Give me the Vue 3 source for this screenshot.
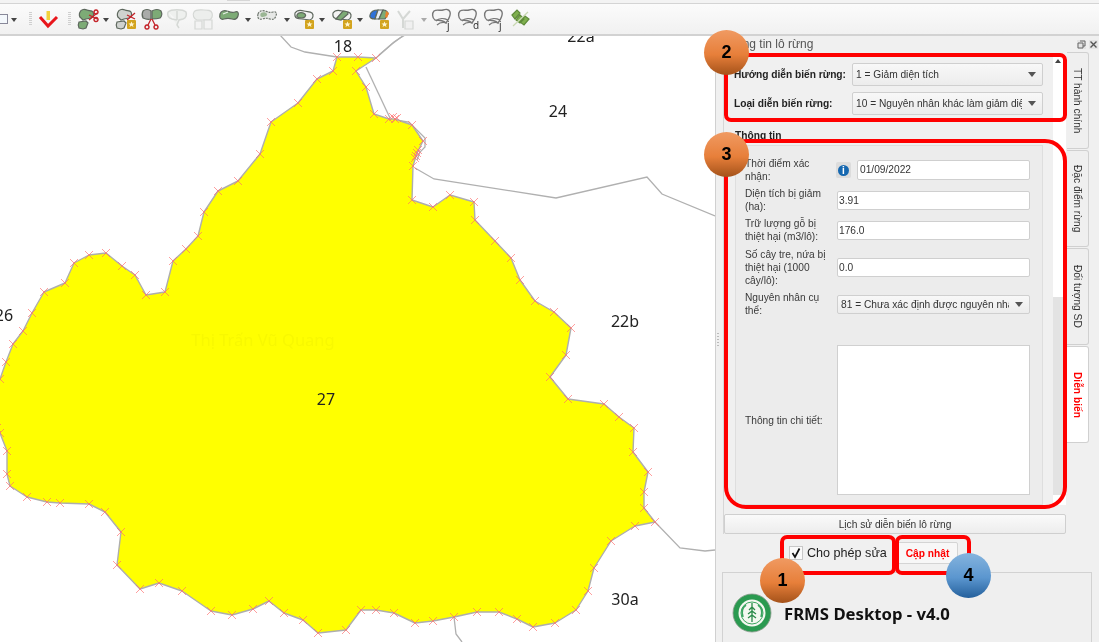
<script setup>
const GREEN = '#7dab76'
const EDGE = '#5d675d'
const PALE = '#d5d8d5'
const RED = '#c4242a'

const BOUNDARY = [
  [337,57],[358,57],[376,58],[356,71],[366,87],[374,114],[389,119],[395,119],[412,125],[423,141],
  [417,153],[413,166],[412,200],[433,207],[450,195],[474,202],[475,220],[495,241],[511,258],[520,280],
  [535,301],[554,312],[571,328],[566,355],[550,377],[568,399],[604,404],[619,417],[634,428],[633,452],
  [648,472],[644,492],[644,508],[655,522],[635,526],[611,541],[594,568],[588,591],[576,610],[555,623],
  [533,627],[517,619],[499,612],[477,612],[454,617],[433,621],[415,623],[394,613],[376,610],[361,610],
  [346,630],[318,633],[303,620],[284,613],[269,601],[253,609],[232,615],[211,611],[182,591],[159,583],
  [140,589],[117,565],[121,532],[105,512],[89,504],[60,503],[47,502],[27,497],[10,486],[7,474],
  [7,451],[0,433],[-3,428],[-8,400],[0,379],[6,362],[13,344],[23,331],[32,313],[44,292],
  [65,283],[74,263],[89,255],[106,253],[122,266],[135,275],[146,295],[165,292],[173,261],[186,249],
  [198,236],[204,212],[218,191],[238,181],[260,154],[271,122],[298,103],[317,79],[333,71],
]
const polygon = BOUNDARY.map(p => p.join(',')).join(' ')

// a few vertices bunched up on the north east corner
const CLUSTER = [[393,117],[397,118],[418,150],[416,156],[415,158]]
const markers = [...BOUNDARY, ...CLUSTER]

const NEIGHBOURS = [
  '280,35 291,47 305,52 337,57',
  '376,58 392,44 400,38 410,32',
  '379,55 394,42 403,36',
  '366,67 390,118',
  '395,120 409,122 425,138 425,147 420,152 417,160',
  '415,168 434,179 556,198 647,177 662,194 715,216',
  '655,522 680,548 705,551 715,550',
  '454,617 456,634 462,642',
]

const LABELS = [
  { text: '18', x: 343, y: 52 },
  { text: '22a', x: 581, y: 42 },
  { text: '24', x: 558, y: 117 },
  { text: '26', x: 4, y: 321 },
  { text: '27', x: 326, y: 405 },
  { text: '22b', x: 625, y: 327 },
  { text: '30a', x: 625, y: 605 },
]

const SCISSORS = [
  { d: 'M13 9l8 4M13 14l8-7', fill: 'none', stroke: RED, width: 1.3 },
  { d: 'M20 11.5a2 2 0 1 0 .01 0M20 4a2 2 0 1 0 .01 0', fill: 'none', stroke: RED, width: 1.5 },
]
const TWO_PIECES = (fill, edge) => [
  { d: 'M4 6c1-3 5-3 7-2s5 0 6 2 1 5-2 6l-5 1-3 1-2-2C3 11 3 8 4 6z', fill, stroke: edge },
  { d: 'M3 16l7-1 2 2-2 5-3 1-4-1c-1-2-1-4 0-6z', fill, stroke: edge },
]
const WIDE = (fill, edge) => [
  { d: 'M3 8c1-3 4-4 7-3s5 2 8 1 4 1 3 4-3 4-6 3-5-1-8 0-5-1-4-5z', fill, stroke: edge },
]
const OUTLINE = { d: 'M3 7c2-3 6-3 9-2s6 0 8 2 1 6-2 7l-8-1c-3 0-8 0-7-6z', fill: 'none', stroke: EDGE }
const FAINT_MAP = [
  { d: 'M3 6c2-3 6-2 10-2s7 0 8 3 0 6-3 7H6C3 13 1 9 3 6z', fill: '#eceeec', stroke: PALE },
  { d: 'M4 15h7v8H4zM13 14h8v9h-8z', fill: '#f3f3f3', stroke: PALE },
]
const CURVE = [
  { d: 'M4 5c3-2 6 0 9-1s6-1 7 2-1 6-2 8l-2 3c-3-3-8-3-11-3C2 12 2 7 4 5z', fill: '#f6f6f6', stroke: '#787878', width: 1.4 },
  { d: 'M6 15c3-3 8-3 12-1M7 19c3-3 7-3 10-2', fill: 'none', stroke: '#787878' },
]

const TOOLS = [
  { type: 'page', w: 8 },
  { type: 'arrow', w: 12 },
  { type: 'space', w: 8 },
  { type: 'grip', w: 4 },
  { type: 'space', w: 4 },
  { type: 'icon', w: 24, paths: [
    { d: 'M10.5 5h3.5v9h-3.5z', fill: '#f2d23c', stroke: 'none' },
    { d: 'M4 11l8 9 9-9', fill: 'none', stroke: '#e8151b', width: 3 },
  ] },
  { type: 'space', w: 7 },
  { type: 'grip', w: 4 },
  { type: 'space', w: 4 },
  { type: 'icon', w: 26, paths: [...TWO_PIECES(GREEN, EDGE), ...SCISSORS] },
  { type: 'arrow', w: 10 },
  { type: 'icon', w: 30, badge: true, paths: [...TWO_PIECES('#cfd2cf', EDGE), ...SCISSORS.slice(0, 1)] },
  { type: 'icon', w: 22, paths: [
    { d: 'M3 5c2-2 6-2 8 0v8c-3 1-6 0-8-1-1-2-1-5 0-7z', fill: '#a9aba9', stroke: EDGE },
    { d: 'M12 5c3-2 7-2 9 0 1 2 1 5-1 7-3 1-5 1-8 1z', fill: GREEN, stroke: EDGE },
    { d: 'M11 13l-3 6M12 13l3 6', fill: 'none', stroke: RED, width: 1.3 },
    { d: 'M7 19a2 2 0 1 0 .01 0M16 19a2 2 0 1 0 .01 0', fill: 'none', stroke: RED, width: 1.5 },
  ] },
  { type: 'icon', w: 28, paths: [
    { d: 'M3 6c3-3 15-3 18 0 1 3 0 6-3 7l-4 1-2 5 2 3M12 5v9M3 6c-1 3 0 6 4 7l5 1', fill: '#eef0ee', stroke: PALE, width: 1.5 },
  ] },
  { type: 'icon', w: 24, paths: FAINT_MAP },
  { type: 'icon', w: 28, paths: [...WIDE(GREEN, EDGE), { d: 'M6 8l5-2', fill: 'none', stroke: '#e8f0e6' }] },
  { type: 'arrow', w: 10 },
  { type: 'icon', w: 28, paths: [
    { ...WIDE('#e6e8e6', '#6d756d')[0], dash: '2 1' },
    { d: 'M6 7c2-1 5-1 6 1s-3 3-5 3-2-3-1-4z', fill: '#9ab694', stroke: 'none' },
  ] },
  { type: 'arrow', w: 11 },
  { type: 'icon', w: 24, badge: true, paths: [
    { ...OUTLINE, fill: '#f4f4f4' },
    { d: 'M5 9c1-3 6-3 8-1s-1 4-3 4-6 0-5-3z', fill: GREEN, stroke: EDGE },
  ] },
  { type: 'arrow', w: 12 },
  { type: 'icon', w: 28, badge: true, paths: [
    { ...OUTLINE, fill: '#f4f4f4' },
    { d: 'M6 13l7-8c3 0 5 1 5 3l-7 6z', fill: GREEN, stroke: EDGE },
  ] },
  { type: 'arrow', w: 8 },
  { type: 'icon', w: 30, badge: true, paths: [
    { d: 'M3 9c1-4 5-5 8-5l-3 9c-3 0-6-1-5-4z', fill: '#2f72d8', stroke: EDGE },
    { d: 'M11 4h5l-4 9H8z', fill: '#e8eef4', stroke: EDGE },
    { d: 'M16 4c3 0 5 2 5 4l-3 5h-6z', fill: GREEN, stroke: EDGE },
    { d: 'M19 5l3 2-2 5-2-1z', fill: '#e8832e', stroke: 'none' },
  ] },
  { type: 'icon', w: 22, paths: [
    { d: 'M5 5l5 8 7-8M10 13v9', fill: 'none', stroke: PALE, width: 2 },
    { d: 'M12 15h8v8h-8z', fill: '#f0f0f0', stroke: PALE },
  ] },
  { type: 'arrow', w: 16, faint: true },
  { type: 'icon', w: 20, letter: 'j', paths: CURVE },
  { type: 'icon', w: 32, letter: 'd', paths: CURVE },
  { type: 'icon', w: 20, letter: 'j', paths: CURVE },
  { type: 'icon', w: 32, paths: [
    { d: 'M4 9l5-5 3 3-5 6zM12 16l5-6 4 3-5 6zM8 14l4-5 4 4-4 4z', fill: '#7fb04e', stroke: '#5f8a3a' },
    { d: 'M5 20l15-14', fill: 'none', stroke: '#c8d8b0' },
  ] },
]

const FIELDS = [
  { label: 'Diện tích bị giảm (ha):', value: '3.91' },
  { label: 'Trữ lượng gỗ bị thiệt hại (m3/lô):', value: '176.0' },
  { label: 'Số cây tre, nứa bị thiệt hại (1000 cây/lô):', value: '0.0', tall: true },
]

const TABS = [
  { name: 'TT hành chính' },
  { name: 'Đặc điểm rừng' },
  { name: 'Đối tượng SD' },
  { name: 'Diễn biến', active: true },
]

const MARKS = [
  { n: 2, cls: 'mark-a', tone: 'orange' },
  { n: 3, cls: 'mark-b', tone: 'orange' },
  { n: 1, cls: 'mark-c', tone: 'orange' },
  { n: 4, cls: 'mark-d', tone: 'blue' },
]
</script>

<template>
  <div class="screen">
    <div class="topstrip"><span class="strip-tab"></span></div>
    <div class="toolbar">
      <div
        v-for="(tool, i) in TOOLS"
        :key="i"
        class="tool"
        :style="{ width: tool.w + 'px' }"
      >
        <span v-if="tool.type === 'page'" class="page"></span>
        <span v-else-if="tool.type === 'arrow'" class="tool-arrow" :class="{ faint: tool.faint }"></span>
        <span v-else-if="tool.type === 'grip'" class="grip"></span>
        <svg v-else-if="tool.type === 'icon'" class="tool-icon" width="24" height="26" viewBox="0 0 24 26">
          <path
            v-for="(p, j) in tool.paths"
            :key="j"
            :d="p.d"
            :fill="p.fill"
            :stroke="p.stroke"
            :stroke-width="p.width || 1.2"
            :stroke-dasharray="p.dash"
          />
          <g v-if="tool.badge">
            <rect x="13" y="14" width="9" height="9" rx="1" fill="#d3a41e" />
            <path d="M17.5 15.5l.9 2h2.1l-1.7 1.4.7 2.2-2-1.3-2 1.3.7-2.2-1.7-1.4h2.1z" fill="#fff6d0" />
          </g>
          <text v-if="tool.letter" x="17" y="23" class="tool-letter">{{ tool.letter }}</text>
        </svg>
      </div>
    </div>

    <div class="workspace">
      <div class="map">
        <svg class="map-svg" width="715" height="606" viewBox="0 36 715 606">
          <polyline
            v-for="line in NEIGHBOURS"
            :key="line"
            :points="line"
            fill="none"
            stroke="#b0b0b0"
            stroke-width="1.3"
          />
          <polygon :points="polygon" fill="#ffff00" stroke="#aeaeae" stroke-width="1.4" stroke-linejoin="round" />
          <text x="263" y="346" class="place">Thị Trấn Vũ Quang</text>
          <path
            v-for="(m, i) in markers"
            :key="i"
            :d="`M${m[0] - 4} ${m[1] - 4}l8 8m0 -8l-8 8`"
            stroke="#ff6a6a"
            stroke-width="1"
            opacity=".65"
            fill="none"
          />
          <text v-for="l in LABELS" :key="l.text" :x="l.x" :y="l.y" class="lot">{{ l.text }}</text>
        </svg>
      </div>

      <aside class="dock">
        <span class="dock-grip"></span>
        <div class="dock-title">
          <span>Thông tin lô rừng</span>
          <div class="dock-btns">
            <span class="dock-btn">
              <svg width="9" height="9" viewBox="0 0 9 9"><path d="M3 1h5v5H6M1 3h5v5H1z" fill="none" stroke="#666" /></svg>
            </span>
            <span class="dock-btn">
              <svg width="9" height="9" viewBox="0 0 9 9"><path d="M1.5 1.5l6 6m0-6l-6 6" fill="none" stroke="#555" stroke-width="1.4" /></svg>
            </span>
          </div>
        </div>

        <div class="dock-body">
          <div class="left-col">
            <div class="pane">
              <div class="pane-content">
                <div class="combo-row">
                  <label class="strong">Hướng diễn biến rừng:</label>
                  <div class="combo wide">
                    <span class="combo-text">1 = Giảm diện tích</span>
                    <i class="caret"></i>
                  </div>
                </div>
                <div class="combo-row">
                  <label class="strong">Loại diễn biến rừng:</label>
                  <div class="combo wide">
                    <span class="combo-text">10 = Nguyên nhân khác làm giảm diện tích</span>
                    <i class="caret"></i>
                  </div>
                </div>

                <div class="group-title strong">Thông tin</div>
                <div class="group">
                  <div class="form-row">
                    <label>Thời điểm xác nhận:</label>
                    <div class="date-cell">
                      <span class="info-btn"><b>i</b></span>
                      <span class="input date">01/09/2022</span>
                    </div>
                  </div>
                  <div
                    v-for="f in FIELDS"
                    :key="f.value"
                    class="form-row"
                    :class="{ tall: f.tall }"
                  >
                    <label>{{ f.label }}</label>
                    <span class="input">{{ f.value }}</span>
                  </div>
                  <div class="form-row">
                    <label>Nguyên nhân cụ thể:</label>
                    <div class="combo slim">
                      <span class="combo-text">81 = Chưa xác định được nguyên nhân gây</span>
                      <i class="caret"></i>
                    </div>
                  </div>
                  <div class="form-row detail">
                    <label>Thông tin chi tiết:</label>
                    <div class="textarea"></div>
                  </div>
                </div>
              </div>
              <div class="scrollbar">
                <i class="scroll-up"></i>
                <div class="scroll-thumb"></div>
                <div class="scroll-track"></div>
              </div>
            </div>
            <button class="history">Lịch sử diễn biến lô rừng</button>
          </div>

          <div class="tabs">
            <div
              v-for="t in TABS"
              :key="t.name"
              class="tab"
              :class="{ active: t.active }"
            >{{ t.name }}</div>
          </div>
        </div>

        <div class="actions">
          <span class="checkbox">
            <svg width="12" height="12" viewBox="0 0 12 12"><path d="M2.5 6l2.5 4 4.5-8.5" fill="none" stroke="#111" stroke-width="1.7" /></svg>
          </span>
          <span class="check-label">Cho phép sửa</span>
          <button class="save">Cập nhật</button>
        </div>

        <div class="footer">
          <svg class="logo" width="40" height="40" viewBox="0 0 40 40">
            <circle cx="20" cy="20" r="19" fill="#2a9a50" stroke="#8a9a8c" stroke-width=".8" />
            <circle cx="20" cy="20" r="13.5" fill="#f4f8f0" />
            <circle cx="20" cy="20" r="11" fill="none" stroke="#3ba560" stroke-width="1" />
            <path d="M20 10v19M20 14l-3 3M20 14l3 3M20 18l-4 3M20 18l4 3M20 22l-4 3M20 22l4 3" stroke="#2a8a48" stroke-width="1.3" fill="none" />
            <path d="M11 24c-2-6 0-10 3-12M29 24c2-6 0-10-3-12" stroke="#3ba560" stroke-width="1.6" fill="none" />
          </svg>
          <span class="brand">FRMS Desktop - v4.0</span>
        </div>
      </aside>
    </div>

    <!-- annotations drawn on top of the screenshot -->
    <div class="callout box-2"></div>
    <div class="callout box-3"></div>
    <div class="callout box-1"></div>
    <div class="callout box-4"></div>
    <div
      v-for="m in MARKS"
      :key="m.n"
      class="mark"
      :class="[m.cls, m.tone]"
    >{{ m.n }}</div>
  </div>
</template>

<style>
html, body { margin: 0; background: #fff; overflow: hidden; }
</style>

<style scoped>
.screen {
  position: relative;
  width: 1099px;
  height: 642px;
  overflow: hidden;
  display: flex;
  flex-direction: column;
  font-family: "Liberation Sans", Arial, sans-serif;
  font-size: 10.2px;
  color: #333;
  background: #fff;
  filter: blur(.35px);
}

.topstrip {
  height: 3px;
  background: #f3f3f3;
  border-bottom: 1px solid #d4d4d4;
  flex: none;
}
.strip-tab {
  display: block;
  width: 23px;
  height: 1px;
  margin-left: 227px;
  background: #d6d6d6;
}
.toolbar {
  height: 30px;
  flex: none;
  display: flex;
  align-items: center;
  background: linear-gradient(#fbfbfb, #f1f1f1);
  border-bottom: 2px solid #d2d2d2;
}
.tool {
  height: 100%;
  flex: none;
  display: flex;
  align-items: center;
  justify-content: center;
}
.tool-icon { flex: none; overflow: visible; }
.page {
  width: 8px;
  height: 10px;
  margin-left: -1px;
  background: #f4f8fc;
  border: 1px solid #889;
  border-left: 0;
  box-sizing: border-box;
}
.tool-arrow {
  width: 0;
  height: 0;
  margin-top: 2px;
  border-left: 3.5px solid transparent;
  border-right: 3.5px solid transparent;
  border-top: 4px solid #444;
}
.tool-arrow.faint { border-top-color: #aaa; }
.grip {
  width: 3px;
  height: 14px;
  background: repeating-linear-gradient(#cfcfcf 0 1px, transparent 1px 2px);
}
.tool-letter {
  font-family: "Noto Sans", sans-serif;
  font-size: 10px;
  fill: #333;
}

.workspace {
  flex: 1;
  min-height: 0;
  display: flex;
}
.map {
  width: 715px;
  flex: none;
  background: #fff;
}
.map-svg { display: block; }
.lot {
  font-family: "Noto Sans", sans-serif;
  font-size: 16px;
  fill: #222;
  text-anchor: middle;
}
.place {
  font-family: "Noto Sans", sans-serif;
  font-size: 16.5px;
  fill: #f8f800;
  text-anchor: middle;
}

.dock {
  position: relative;
  flex: 1;
  display: flex;
  flex-direction: column;
  background: #f0f0f0;
  border-left: 1px solid #d0d0d0;
}
.dock-grip {
  position: absolute;
  left: 1px;
  top: 296px;
  width: 2px;
  height: 16px;
  background-image: radial-gradient(#bbb 40%, transparent 45%);
  background-size: 2px 3px;
}
.dock-title {
  height: 16px;
  flex: none;
  display: flex;
  align-items: center;
  justify-content: space-between;
  padding: 0 1px 0 6px;
  font-size: 12px;
  color: #555;
}
.dock-btns { display: flex; gap: 3px; }
.dock-btn {
  width: 9px;
  height: 9px;
  display: flex;
  background: #e4e4e4;
}

.dock-body {
  display: flex;
  flex: none;
  padding-left: 7px;
}
.left-col {
  width: 343px;
  flex: none;
  border-left: 1px solid #d6d6d6;
}
.pane {
  height: 462px;
  display: flex;
  box-sizing: border-box;
  background: #f0f0f0;
}
.pane-content {
  width: 329px;
  flex: none;
  padding-top: 11px;
}
.combo-row {
  height: 23px;
  box-sizing: border-box;
  display: flex;
  align-items: center;
  justify-content: space-between;
  padding-left: 10px;
  margin-bottom: 6px;
  width: 319px;
}
.strong { font-weight: 700; color: #222; white-space: nowrap; }
.combo {
  display: flex;
  align-items: center;
  box-sizing: border-box;
  background: linear-gradient(#f8f8f8, #ececec);
  border: 1px solid #cfcfcf;
  border-radius: 2px;
  padding: 0 6px 0 3px;
  gap: 6px;
}
.combo.wide { width: 191px; height: 23px; }
.combo.slim { width: 193px; height: 19px; }
.combo-text {
  flex: 1;
  min-width: 0;
  white-space: nowrap;
  overflow: hidden;
}
.caret {
  flex: none;
  width: 0;
  height: 0;
  border-left: 4px solid transparent;
  border-right: 4px solid transparent;
  border-top: 5px solid #555;
}
.group-title {
  height: 14px;
  line-height: 14px;
  margin: 14px 0 2px 11px;
}
.group {
  height: 360px;
  box-sizing: border-box;
  margin-left: 11px;
  width: 308px;
  padding: 11px 0 0 9px;
  background: #ececec;
  border: 1px solid #dedede;
  overflow: hidden;
  display: flex;
  flex-direction: column;
  gap: 4px;
}
.form-row {
  display: flex;
  align-items: center;
  height: 26px;
  flex: none;
}
.form-row.tall { height: 39px; margin-top: 1px; }
.form-row.detail { height: 150px; margin-top: 24px; }
.form-row label {
  width: 92px;
  flex: none;
  padding-right: 6px;
  box-sizing: border-box;
  line-height: 13px;
  color: #3a3a3a;
}
.input {
  width: 193px;
  height: 19px;
  line-height: 17px;
  box-sizing: border-box;
  background: #fff;
  border: 1px solid #cfcfcf;
  border-radius: 2px;
  padding: 0 1px;
}
.date-cell {
  display: flex;
  align-items: center;
  gap: 6px;
  margin-left: -1px;
}
.input.date { width: 173px; height: 20px; line-height: 18px; padding-left: 2px; }
.info-btn {
  width: 15px;
  height: 16px;
  display: flex;
  align-items: center;
  justify-content: center;
  background: #dcdcdc;
  border-radius: 2px;
}
.info-btn b {
  width: 11px;
  height: 11px;
  line-height: 11px;
  border-radius: 50%;
  background: #1668b0;
  color: #fff;
  text-align: center;
  font-size: 10px;
}
.textarea {
  width: 193px;
  height: 150px;
  box-sizing: border-box;
  background: #fff;
  border: 1px solid #d0d0d0;
}

.scrollbar {
  width: 13px;
  flex: none;
  margin-top: 3px;
  height: 450px;
  display: flex;
  flex-direction: column;
  background: #fff;
  position: relative;
}
.scroll-up {
  position: absolute;
  left: 2px;
  top: 4px;
  width: 0;
  height: 0;
  border-left: 3.5px solid transparent;
  border-right: 3.5px solid transparent;
  border-bottom: 4px solid #444;
}
.scroll-thumb { height: 242px; flex: none; }
.scroll-track { height: 198px; flex: none; background: #e3e3e3; }

.history {
  display: block;
  width: 342px;
  height: 20px;
  padding: 0;
  font: inherit;
  color: #333;
  background: linear-gradient(#fafafa, #ededed);
  border: 1px solid #cfcfcf;
  border-radius: 2px;
}

.tabs {
  width: 22px;
  flex: none;
}
.tab {
  height: 97px;
  box-sizing: border-box;
  writing-mode: vertical-rl;
  text-align: center;
  line-height: 21px;
  background: #efefef;
  border: 1px solid #d0d0d0;
  border-left: 0;
  border-radius: 0 3px 3px 0;
  margin-bottom: 1px;
  color: #333;
}
.tab.active {
  background: #fff;
  color: #f00;
  font-weight: 700;
}

.actions {
  height: 38px;
  flex: none;
  display: flex;
  align-items: center;
  padding-left: 73px;
}
.checkbox {
  width: 14px;
  height: 14px;
  flex: none;
  box-sizing: border-box;
  display: flex;
  align-items: center;
  justify-content: center;
  background: #fafafa;
  border: 1px solid #c8c8c8;
}
.check-label {
  width: 79px;
  flex: none;
  margin-left: 4px;
  font-size: 12.6px;
  color: #222;
  white-space: nowrap;
}
.save {
  flex: none;
  margin-left: 11px;
  width: 61px;
  height: 22px;
  padding: 0;
  font: inherit;
  font-weight: 700;
  color: #f00;
  background: #f7f7f7;
  border: 1px solid #d4d4d4;
  border-radius: 2px;
}

.footer {
  flex: 1;
  margin: 0 7px 0 6px;
  display: flex;
  align-items: center;
  padding: 11px 0 0 9px;
  border: 1px solid #d2d2d2;
  border-bottom: 0;
  background: #efefef;
  gap: 12px;
}
.logo { flex: none; }
.brand {
  font-family: "Noto Sans", sans-serif;
  font-weight: 700;
  font-size: 16.7px;
  color: #111;
  white-space: nowrap;
}

.callout {
  position: absolute;
  box-sizing: border-box;
  border: 4px solid #f00;
  border-radius: 7px;
}
.box-2 { left: 724px; top: 53px; width: 343px; height: 69px; }
.box-3 { left: 724px; top: 139px; width: 343px; height: 370px; border-radius: 22px; }
.box-1 { left: 780px; top: 535px; width: 116px; height: 40px; }
.box-4 { left: 895px; top: 535px; width: 76px; height: 40px; }

.mark {
  position: absolute;
  width: 45px;
  height: 45px;
  border-radius: 50%;
  display: flex;
  align-items: center;
  justify-content: center;
  font-family: "Liberation Sans", sans-serif;
  font-weight: 700;
  font-size: 18px;
  color: #000;
}
.mark.orange { background: linear-gradient(#f09a62, #e77f3a 55%, #a4521a); }
.mark.blue { background: linear-gradient(#85b4de, #5b96cf 55%, #24609c); }
.mark-a { left: 704px; top: 30px; }
.mark-b { left: 704px; top: 132px; }
.mark-c { left: 760px; top: 558px; }
.mark-d { left: 946px; top: 553px; }
</style>
